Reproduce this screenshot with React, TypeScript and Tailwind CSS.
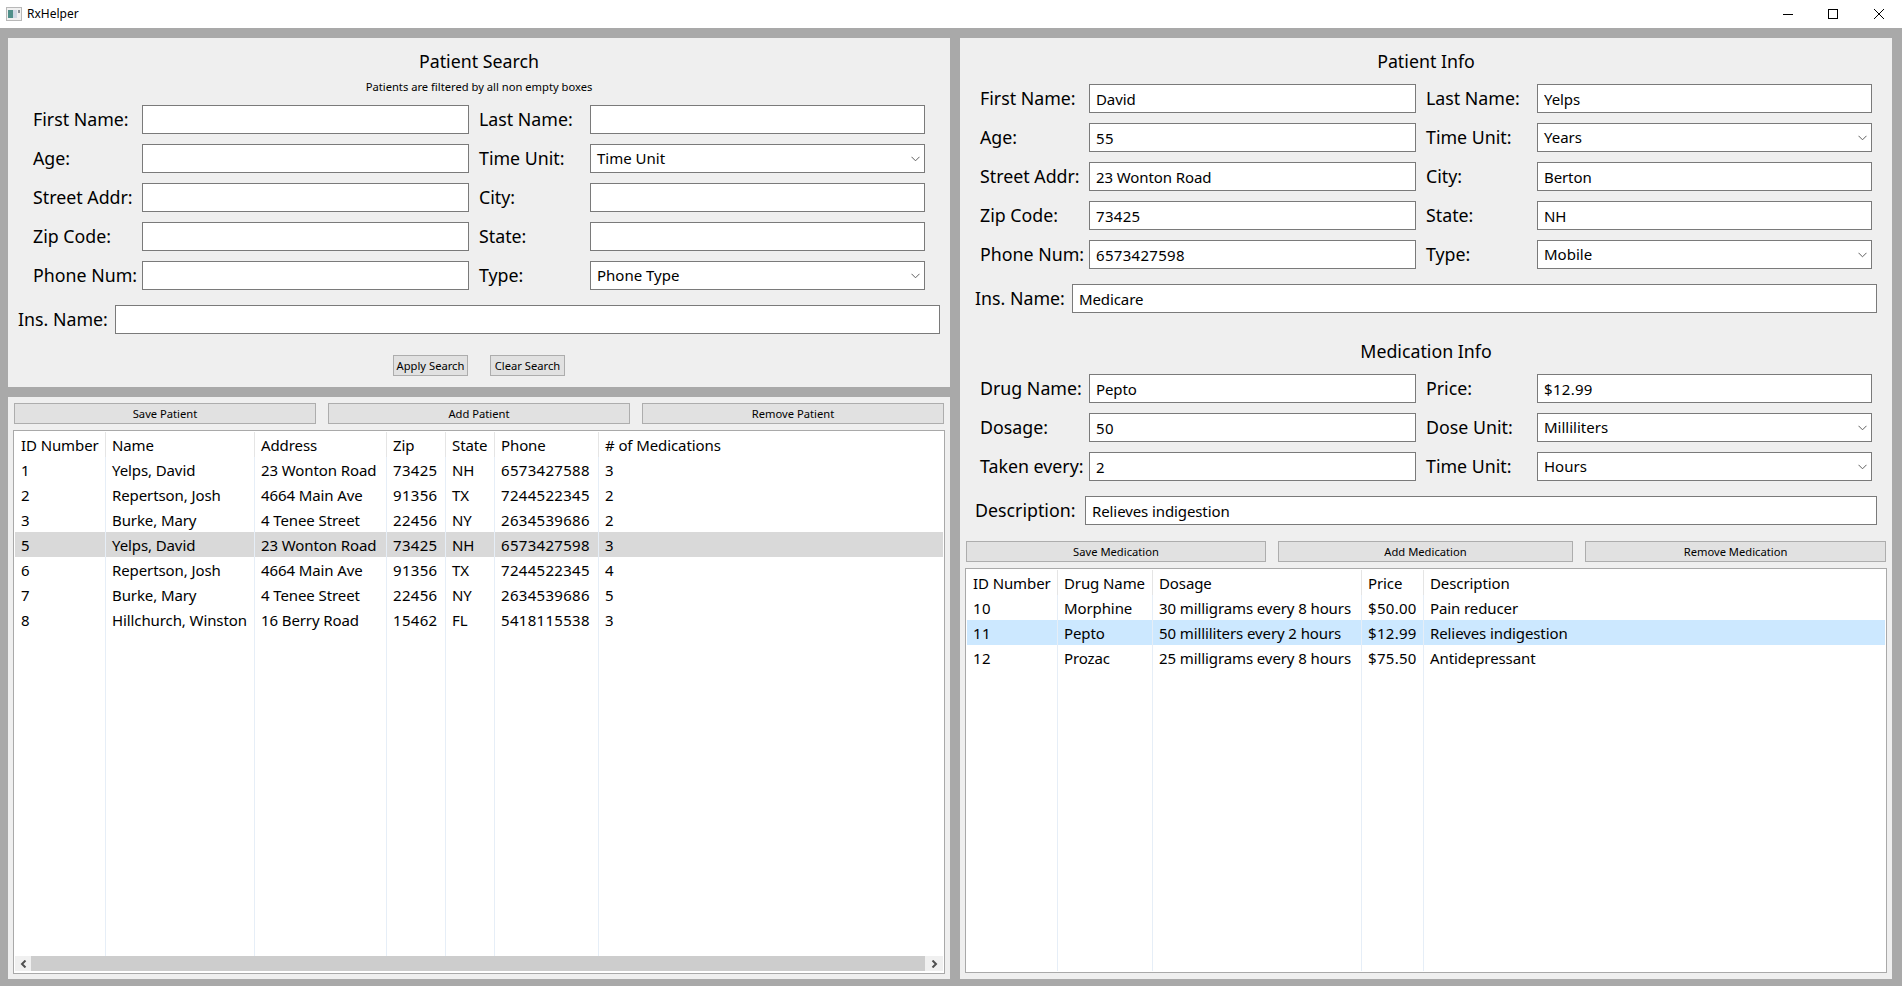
import React from 'react';

const patients = [
  ['1', 'Yelps, David', '23 Wonton Road', '73425', 'NH', '6573427588', '3'],
  ['2', 'Repertson, Josh', '4664 Main Ave', '91356', 'TX', '7244522345', '2'],
  ['3', 'Burke, Mary', '4 Tenee Street', '22456', 'NY', '2634539686', '2'],
  ['5', 'Yelps, David', '23 Wonton Road', '73425', 'NH', '6573427598', '3'],
  ['6', 'Repertson, Josh', '4664 Main Ave', '91356', 'TX', '7244522345', '4'],
  ['7', 'Burke, Mary', '4 Tenee Street', '22456', 'NY', '2634539686', '5'],
  ['8', 'Hillchurch, Winston', '16 Berry Road', '15462', 'FL', '5418115538', '3'],
];

const medications = [
  ['10', 'Morphine', '30 milligrams every 8 hours', '$50.00', 'Pain reducer'],
  ['11', 'Pepto', '50 milliliters every 2 hours', '$12.99', 'Relieves indigestion'],
  ['12', 'Prozac', '25 milligrams every 8 hours', '$75.50', 'Antidepressant'],
];

const patientColumns = [
  { title: 'ID Number', width: 'w-[91px]' },
  { title: 'Name', width: 'w-[149px]' },
  { title: 'Address', width: 'w-[132px]' },
  { title: 'Zip', width: 'w-[59px]' },
  { title: 'State', width: 'w-[49px]' },
  { title: 'Phone', width: 'w-[104px]' },
  { title: '# of Medications', width: 'flex-1' },
];

const medicationColumns = [
  { title: 'ID Number', width: 'w-[91px]' },
  { title: 'Drug Name', width: 'w-[95px]' },
  { title: 'Dosage', width: 'w-[209px]' },
  { title: 'Price', width: 'w-[62px]' },
  { title: 'Description', width: 'flex-1' },
];

// digits run a bit wider in the reference font
const spacingFor = (value: string) => (/^[\d$.]+$/.test(value) ? 'tracking-[0.3px]' : 'tracking-[-0.1px]');

const Field = ({ value = '' }: { value?: string }) => (
  <input
    readOnly
    value={value}
    className={`h-[29px] w-full border border-[#7a7a7a] bg-white pl-[6px] text-[15px] text-black outline-none ${spacingFor(value)}`}
  />
);

const Select = ({ value }: { value: string }) => (
  <div className="flex h-[29px] w-full items-center justify-between border border-[#7a7a7a] bg-white pl-[6px] pr-[4px] text-[15px] text-black">
    <span>{value}</span>
    <svg width="9" height="6" viewBox="0 0 9 6" fill="none" stroke="#606060" strokeWidth="1">
      <path d="M0.5 0.8 L4.5 4.8 L8.5 0.8" />
    </svg>
  </div>
);

const Label = ({ text, className = '' }: { text: string; className?: string }) => (
  <span className={`pb-[1px] text-[17.8px] leading-[26px] text-black ${className}`}>{text}</span>
);

const FormGrid = ({ rows }: { rows: [string, React.ReactNode, string, React.ReactNode][] }) => (
  <div className="grid grid-cols-[109px_327px_121px_335px] items-center gap-y-[10px]">
    {rows.map(([leftLabel, leftField, rightLabel, rightField]) => (
      <React.Fragment key={leftLabel}>
        <Label text={leftLabel} />
        {leftField}
        <Label text={rightLabel} className="pl-[10px]" />
        {rightField}
      </React.Fragment>
    ))}
  </div>
);

const ActionButton = ({ text, className = '' }: { text: string; className?: string }) => (
  <button className={`h-[21px] border border-[#adadad] bg-[#e1e1e1] text-[11.2px] leading-none text-black ${className}`}>
    {text}
  </button>
);

const DataTable = ({
  columns,
  rows,
  selected,
  selectedClass,
  scrollbar,
}: {
  columns: { title: string; width: string }[];
  rows: string[][];
  selected: number;
  selectedClass: string;
  scrollbar?: boolean;
}) => (
  <div className="flex min-h-0 flex-1 flex-col border border-[#a9a9a9] bg-white p-px">
    <div className="flex min-h-0 flex-1">
      {columns.map((col, c) => {
        const last = c === columns.length - 1;
        return (
          <div key={col.title} className={`flex flex-col ${col.width}`}>
            <div className={`h-[25px] whitespace-nowrap pl-[6px] text-[15px] leading-[27px] tracking-[-0.1px] text-black ${last ? '' : 'border-r border-[#e5e5e5]'}`}>
              {col.title}
            </div>
            <div className={`flex-1 ${last ? '' : 'border-r border-[#e6eef7]'}`}>
              {rows.map((row, r) => (
                <div
                  key={r}
                  className={`h-[25px] whitespace-nowrap pl-[6px] text-[15px] leading-[27px] text-black ${spacingFor(row[c])} ${r === selected ? selectedClass : ''}`}
                >
                  {row[c]}
                </div>
              ))}
            </div>
          </div>
        );
      })}
    </div>
    {scrollbar && (
      <div className="mb-px flex h-[15px] bg-[#f0f0f0]">
        <div className="flex w-4 items-center justify-center">
          <svg width="7" height="8" viewBox="0 0 7 8" fill="none" stroke="#505050" strokeWidth="2">
            <path d="M5.5 0.5 L2 4 L5.5 7.5" />
          </svg>
        </div>
        <div className="flex-1 bg-[#cdcdcd]" />
        <div className="flex w-[18px] items-center justify-center">
          <svg width="7" height="8" viewBox="0 0 7 8" fill="none" stroke="#505050" strokeWidth="2">
            <path d="M1.5 0.5 L5 4 L1.5 7.5" />
          </svg>
        </div>
      </div>
    )}
  </div>
);

const TitleBar = () => (
  <div className="flex h-[28px] items-center bg-white pl-[6px] text-[12px] text-black">
    <svg width="16" height="14" viewBox="0 0 16 14">
      <rect x="0.5" y="0.5" width="15" height="13" fill="#f0f0f0" stroke="#b8b8b8" />
      <rect x="2" y="3" width="5" height="8" fill="#4f8f8a" />
      <rect x="7" y="3" width="4" height="8" fill="#cfd8e4" />
      <rect x="12" y="3" width="2" height="3" fill="#8a8f96" />
    </svg>
    <span className="ml-[5px]">RxHelper</span>
    <div className="ml-auto flex items-center">
      <svg width="101" height="12" viewBox="0 0 101 12" fill="none" stroke="#000" strokeWidth="1" className="mr-[18px]">
        <path d="M0 6.5 H10" />
        <rect x="45.5" y="1.5" width="9" height="9" />
        <path d="M91 1 L101 11 M101 1 L91 11" />
      </svg>
    </div>
  </div>
);

const PatientSearch = () => (
  <section className="flex h-[349px] flex-col bg-[#efefef] pl-[25px]">
    <h2 className="-ml-[25px] mt-[10px] h-[24px] text-center text-[17.8px] leading-[26px] text-black">Patient Search</h2>
    <p className="-ml-[25px] mt-[6px] h-[16px] text-center text-[11.2px] leading-[18px] text-black">
      Patients are filtered by all non empty boxes
    </p>
    <div className="mt-[11px]">
      <FormGrid
        rows={[
          ['First Name:', <Field />, 'Last Name:', <Field />],
          ['Age:', <Field />, 'Time Unit:', <Select value="Time Unit" />],
          ['Street Addr:', <Field />, 'City:', <Field />],
          ['Zip Code:', <Field />, 'State:', <Field />],
          ['Phone Num:', <Field />, 'Type:', <Select value="Phone Type" />],
        ]}
      />
    </div>
    <div className="-ml-[15px] mt-[15px] flex items-center">
      <Label text="Ins. Name:" className="w-[97px]" />
      <div className="w-[825px]">
        <Field />
      </div>
    </div>
    <div className="-ml-[25px] mt-[21px] flex justify-center gap-[22px]">
      <ActionButton text="Apply Search" className="w-[75px]" />
      <ActionButton text="Clear Search" className="w-[75px]" />
    </div>
  </section>
);

const PatientList = () => (
  <section className="flex min-h-0 flex-1 flex-col bg-[#efefef] px-[5px] pb-[5px] pt-[6px]">
    <div className="flex gap-[12px] px-px">
      <ActionButton text="Save Patient" className="w-[302px]" />
      <ActionButton text="Add Patient" className="w-[302px]" />
      <ActionButton text="Remove Patient" className="w-[302px]" />
    </div>
    <div className="mt-[6px] flex min-h-0 flex-1">
      <DataTable columns={patientColumns} rows={patients} selected={3} selectedClass="bg-[#d9d9d9]" scrollbar />
    </div>
  </section>
);

const PatientInfo = () => (
  <section className="flex w-[932px] flex-col bg-[#efefef] px-[5px] pb-[6px]">
    <h2 className="mt-[11px] h-[24px] text-center text-[17.8px] leading-[25px] text-black">Patient Info</h2>
    <div className="ml-[15px] mt-[11px]">
      <FormGrid
        rows={[
          ['First Name:', <Field value="David" />, 'Last Name:', <Field value="Yelps" />],
          ['Age:', <Field value="55" />, 'Time Unit:', <Select value="Years" />],
          ['Street Addr:', <Field value="23 Wonton Road" />, 'City:', <Field value="Berton" />],
          ['Zip Code:', <Field value="73425" />, 'State:', <Field value="NH" />],
          ['Phone Num:', <Field value="6573427598" />, 'Type:', <Select value="Mobile" />],
        ]}
      />
    </div>
    <div className="ml-[10px] mt-[15px] flex items-center">
      <Label text="Ins. Name:" className="w-[97px]" />
      <div className="w-[805px]">
        <Field value="Medicare" />
      </div>
    </div>
    <h2 className="mt-[25px] h-[24px] text-center text-[17.8px] leading-[27px] text-black">Medication Info</h2>
    <div className="ml-[15px] mt-[12px]">
      <FormGrid
        rows={[
          ['Drug Name:', <Field value="Pepto" />, 'Price:', <Field value="$12.99" />],
          ['Dosage:', <Field value="50" />, 'Dose Unit:', <Select value="Milliliters" />],
          ['Taken every:', <Field value="2" />, 'Time Unit:', <Select value="Hours" />],
        ]}
      />
    </div>
    <div className="ml-[10px] mt-[15px] flex items-center">
      <Label text="Description:" className="w-[110px]" />
      <div className="w-[792px]">
        <Field value="Relieves indigestion" />
      </div>
    </div>
    <div className="mt-[16px] flex gap-[12px] px-px">
      <ActionButton text="Save Medication" className="w-[300px]" />
      <ActionButton text="Add Medication" className="w-[295px]" />
      <ActionButton text="Remove Medication" className="w-[301px]" />
    </div>
    <div className="mt-[6px] flex min-h-0 flex-1">
      <DataTable columns={medicationColumns} rows={medications} selected={1} selectedClass="bg-[#cce8ff]" />
    </div>
  </section>
);

const App = () => (
  <div className="flex h-[986px] w-[1902px] flex-col overflow-hidden bg-[#a9a9a9] font-['Noto_Sans',sans-serif]">
    <TitleBar />
    <main className="flex min-h-0 flex-1 gap-[10px] pb-[7px] pl-[8px] pr-[10px] pt-[10px]">
      <div className="flex w-[942px] flex-col gap-[10px]">
        <PatientSearch />
        <PatientList />
      </div>
      <PatientInfo />
    </main>
  </div>
);

export default App;
